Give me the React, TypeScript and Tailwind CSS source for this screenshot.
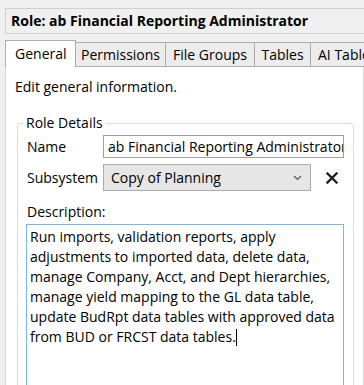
import React from "react";

export default function App() {
  const lines = [
    "Run imports, validation reports, apply",
    "adjustments to imported data, delete data,",
    "manage Company, Acct, and Dept hierarchies,",
    "manage yield mapping to the GL data table,",
    "update BudRpt data tables with approved data",
  ];
  return (
    <div className="w-[364px] h-[385px] bg-[#f0f0f0] overflow-hidden flex flex-col text-black text-[14px] leading-[20px] font-['Open_Sans',sans-serif]">
      <div className="mt-[8px] ml-[5px] h-[26px] shrink-0 border border-r-0 border-[#d0d0d0] bg-[#f0f0f0] flex items-center pl-[5px] font-bold text-[14px] whitespace-nowrap">
        Role: ab Financial Reporting Administrator
      </div>

      <div className="mt-[6px] ml-[5px] w-[359px] overflow-hidden flex items-end h-[27px] shrink-0 -mb-px relative z-10 whitespace-nowrap">
        <div className="shrink-0 h-[27px] w-[71px] bg-white border border-b-0 border-[#acacac] flex items-center pl-[9px]">
          General
        </div>
        <div className="shrink-0 h-[25px] w-[90px] bg-[#ececec] border border-l-0 border-[#acacac] flex items-center justify-center">
          Permissions
        </div>
        <div className="shrink-0 h-[25px] w-[89px] bg-[#ececec] border border-l-0 border-[#acacac] flex items-center justify-center">
          File Groups
        </div>
        <div className="shrink-0 h-[25px] w-[56px] bg-[#ececec] border border-l-0 border-[#acacac] flex items-center justify-center">
          Tables
        </div>
        <div className="shrink-0 h-[25px] w-[80px] bg-[#ececec] border border-l-0 border-[#acacac] flex items-center pl-[7px]">
          AI Tables
        </div>
      </div>

      <div className="ml-[5px] w-[359px] flex-1 bg-white border-l border-r border-t border-[#d9d9d9] pt-[10px]">
        <div className="pl-[9px]">Edit general information.</div>

        <fieldset className="mt-[16px] ml-[11px] w-[337px] h-[300px] border border-[#dcdcdc] rounded-[3px] pl-[5px] pr-[9px]">
          <legend className="px-[3px] leading-[20px]">Role Details</legend>
          <div className="pl-[4px]">
            <div className="mt-[2px] flex items-center">
              <div className="w-[76px]">Name</div>
              <div className="w-[241px] h-[23px] border border-[#a0a0a0] flex items-center pl-[4px] overflow-hidden whitespace-nowrap">
                ab Financial Reporting Administrator
              </div>
            </div>
            <div className="mt-[6px] flex items-center">
              <div className="w-[76px]">Subsystem</div>
              <div className="w-[208px] h-[27px] border border-[#acacac] bg-[#e6e6e6] flex items-center pl-[7px] pr-[8px] justify-between">
                <span>Copy of Planning</span>
                <svg width="9" height="6" viewBox="0 0 9 6">
                  <path d="M1 1 L4.5 4.5 L8 1" fill="none" stroke="#555" strokeWidth="1.2" />
                </svg>
              </div>
              <div className="ml-[15px] flex items-center">
                <svg width="12" height="12" viewBox="0 0 12 12">
                  <path d="M1.5 1.5 L10.5 10.5 M10.5 1.5 L1.5 10.5" stroke="#222" strokeWidth="2.4" strokeLinecap="square" />
                </svg>
              </div>
            </div>
            <div className="mt-[11px]">Description:</div>
            <div className="mt-[2px] -ml-px w-[318px] h-[170px] border border-[#7eb4ea] pl-[3px] pt-[2px] whitespace-nowrap">
              {lines.map((l) => (
                <div key={l}>{l}</div>
              ))}
              <div>
                from BUD or FRCST data tables.
                <span className="inline-block w-px h-[17px] bg-black align-[-4px]" />
              </div>
            </div>
          </div>
        </fieldset>
      </div>
    </div>
  );
}
